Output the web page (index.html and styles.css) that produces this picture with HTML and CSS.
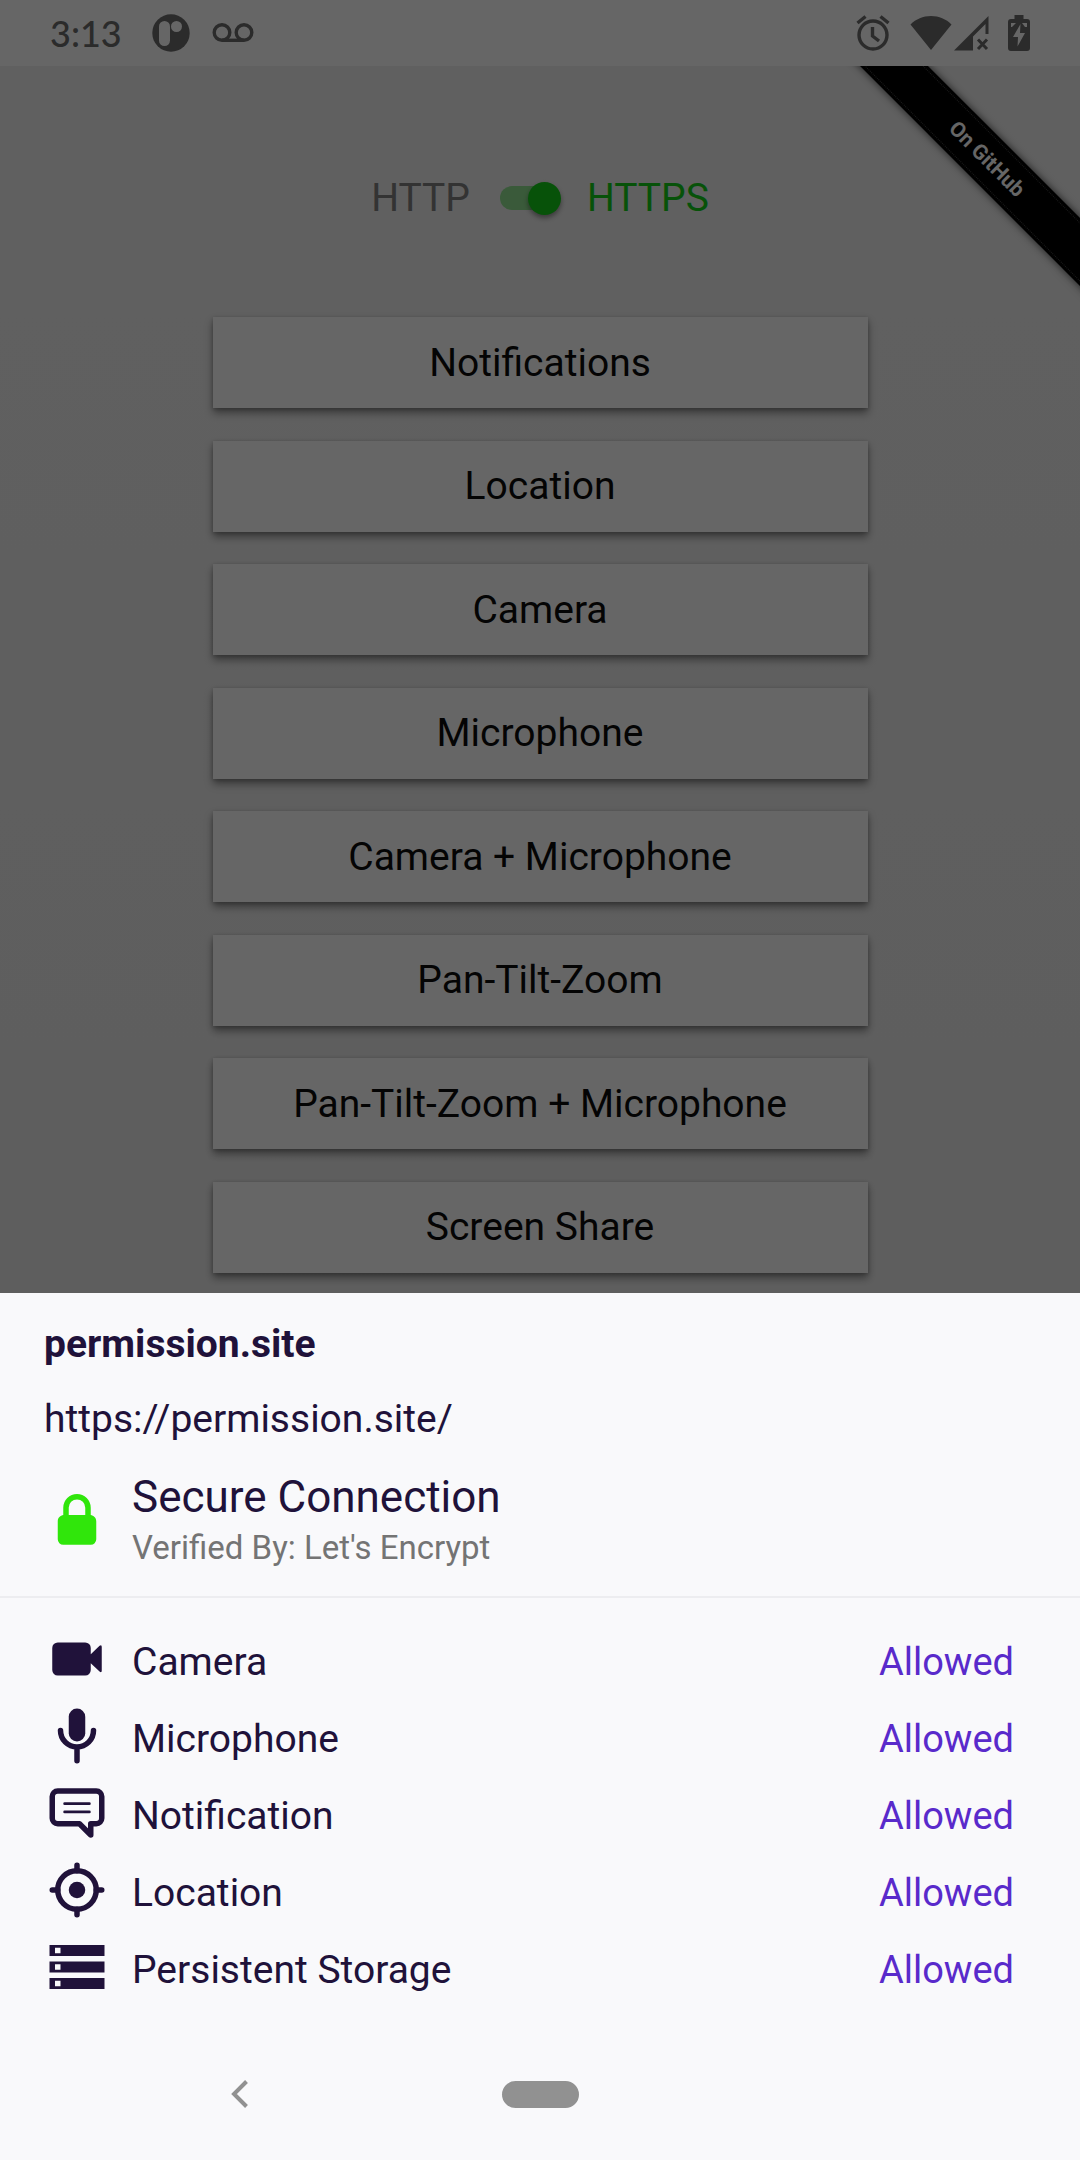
FILE: index.html
```html
<!DOCTYPE html>
<html lang="en">
<head>
<meta charset="utf-8">
<meta name="viewport" content="width=device-width, initial-scale=1">
<title>permission.site</title>
<link rel="stylesheet" href="styles.css">
</head>
<body>
<div class="backdrop">
  <header class="status">
    <div class="status-group">
      <time class="clock">3:13</time>
      <svg class="status-app" viewBox="0 0 38 38" width="38" height="38" aria-hidden="true"><circle cx="19" cy="19" r="18.700"/><rect class="cut" x="7" y="7" width="11" height="25" rx="5.500"/><circle class="cut" cx="24.500" cy="12.500" r="5.500"/></svg>
      <svg class="status-mail" viewBox="0 0 42 20" width="42" height="20" aria-hidden="true"><g fill="none" stroke="currentColor" stroke-width="3.400"><circle cx="10" cy="9.500" r="7.800"/><circle cx="32" cy="9.500" r="7.800"/><path d="M10 17.300H32"/></g></svg>
    </div>
    <div class="status-group status-right">
      <svg viewBox="0 0 34 36" width="34" height="36" aria-hidden="true"><g fill="none" stroke="currentColor" stroke-width="3.400"><circle cx="17" cy="20" r="14"/><path d="M1.500 8L9.500 1.500M24.500 1.500L32.500 8M16.500 12V21L23 26"/></g></svg>
      <svg class="wifi" viewBox="0 0 42 36" width="42" height="36" aria-hidden="true"><path d="M21 35L.5 9.500C6 4 13 1 21 1S36 4 41.500 9.500Z"/></svg>
      <svg class="signal" viewBox="0 0 36 36" width="36" height="36" aria-hidden="true"><path d="M0 35.500L34.500 1V19H31.500V9L19 21.500V35.500Z"/><path d="M24 24.500L33 34M33 24.500L24 34" fill="none" stroke="currentColor" stroke-width="3"/></svg>
      <svg viewBox="0 0 22 36" width="22" height="36" aria-hidden="true"><path d="M6.500 0H15.500V4H19Q22 4 22 7V33Q22 36 19 36H3Q0 36 0 33V7Q0 4 3 4H6.500Z"/><path class="cut" d="M3 8H8L4 12H3ZM14 8H19V12H17ZM12.500 9L5 22H10L9.500 31.500L17 18H12Z"/></svg>
    </div>
  </header>
  <main class="page">
    <div class="ribbon-clip"><a class="ribbon" href="#github">On GitHub</a></div>
    <div class="protocol">
      <label class="http" for="protocol">HTTP</label>
      <input class="switch" id="protocol" type="checkbox" role="switch" checked>
      <label class="https" for="protocol">HTTPS</label>
    </div>
    <div class="requests">
      <button type="button">Notifications</button>
      <button type="button">Location</button>
      <button type="button">Camera</button>
      <button type="button">Microphone</button>
      <button type="button">Camera + Microphone</button>
      <button type="button">Pan-Tilt-Zoom</button>
      <button type="button">Pan-Tilt-Zoom + Microphone</button>
      <button type="button">Screen Share</button>
    </div>
  </main>
</div>
<section class="sheet" aria-labelledby="site">
  <div class="site">
    <h1 id="site">permission.site</h1>
    <p class="url">https://permission.site/</p>
    <div class="secure">
      <svg class="icon lock" viewBox="0 0 24 24" aria-hidden="true"><path d="M5 12.500C5 11 6 10.500 7 10.200V7.500a5 5 0 0 1 10 0V10.200C18 10.500 19 11 19 12.500V19a2 2 0 0 1-2 2H7a2 2 0 0 1-2-2ZM9 10.200H15V7.500a3 3 0 0 0-6 0Z" fill-rule="evenodd"/></svg>
      <div>
        <h2>Secure Connection</h2>
        <p class="issuer">Verified By: Let's Encrypt</p>
      </div>
    </div>
  </div>
  <ul class="permissions">
    <li><svg class="icon" viewBox="0 0 24 24" aria-hidden="true"><path d="M5 6H15a2 2 0 0 1 2 2V10.300L20.200 7.200Q21 6.600 21 7.600V16.200Q21 17.200 20.200 16.500L17 13.500V16a2 2 0 0 1-2 2H5a2 2 0 0 1-2-2V8a2 2 0 0 1 2-2Z"/></svg><span>Camera</span><button type="button">Allowed</button></li>
    <li><svg class="icon" viewBox="0 0 24 24" aria-hidden="true"><rect x="9" y="2" width="6" height="12" rx="3"/><path d="M6 10a6 6 0 0 0 12 0M12 16.500V21" fill="none" stroke="currentColor" stroke-width="2" stroke-linecap="round"/></svg><span>Microphone</span><button type="button">Allowed</button></li>
    <li><svg class="icon" viewBox="0 0 24 24" aria-hidden="true"><path d="M5 4H19a2 2 0 0 1 2 2V13.900a2 2 0 0 1-2 2H17V20L12.900 15.900H5a2 2 0 0 1-2-2V6a2 2 0 0 1 2-2Z" fill="none" stroke="currentColor" stroke-width="2" stroke-linejoin="round"/><path d="M7.500 8.600H16.500M7.500 11.600H16.500" fill="none" stroke="currentColor" stroke-linecap="round"/></svg><span>Notification</span><button type="button">Allowed</button></li>
    <li><svg class="icon" viewBox="0 0 24 24" aria-hidden="true"><circle cx="12" cy="12" r="3"/><g fill="none" stroke="currentColor" stroke-width="2" stroke-linecap="round"><circle cx="12" cy="12" r="7"/><path d="M12 3V5M12 19V21M3 12H5M19 12H21"/></g></svg><span>Location</span><button type="button">Allowed</button></li>
    <li><svg class="icon" viewBox="0 0 24 24" aria-hidden="true"><path fill-rule="evenodd" d="M2 4H22V8H2ZM4 5V7H6V5ZM2 10H22V14H2ZM4 11V13H6V11ZM2 16H22V20H2ZM4 17V19H6V17Z"/></svg><span>Persistent Storage</span><button type="button">Allowed</button></li>
  </ul>
</section>
<nav class="navbar" aria-label="System">
  <button class="back" type="button" aria-label="Back"><svg viewBox="0 0 18 28" width="18" height="28" aria-hidden="true"><path d="M15.500 1.500L3 14L15.500 26.500" fill="none" stroke="currentColor" stroke-width="4"/></svg></button>
  <button class="home" type="button" aria-label="Home"></button>
</nav>
</body>
</html>
```
FILE: styles.css
```css
* { box-sizing: border-box; margin: 0; padding: 0; }

body {
  display: flex;
  flex-direction: column;
  min-height: 100vh;
  background: #f9f9fb;
  color: #20123a;
  font: 39px/46px Roboto, sans-serif;
}

button { border: 0; background: none; color: inherit; font: inherit; }
svg { display: block; flex: none; fill: currentColor; }

/* Web page, dimmed by the scrim */
.backdrop {
  position: relative;
  display: flex;
  flex: 1;
  flex-direction: column;
}
.backdrop::after {
  content: "";
  position: absolute;
  inset: 0;
  background: rgba(0, 0, 0, .6);
}

.status {
  display: flex;
  align-items: center;
  justify-content: space-between;
  height: 66px;
  padding: 0 50px;
  background: #fff;
  color: #6b6b6b;
}
.status-group { display: flex; align-items: center; }
.clock { font: 500 36px/46px Lato, sans-serif; }
.status-app { margin: 0 22px 0 30px; }
.wifi { margin-left: 20px; }
.signal { margin: 0 18px 0 2px; }
.cut { fill: #fff; }

.page {
  position: relative;
  display: flex;
  flex: 1;
  flex-direction: column;
  align-items: center;
  padding: 109px 32px 20px;
  background: linear-gradient(#f0f0f0, #ebebeb);
}

.ribbon-clip {
  position: absolute;
  top: 0;
  right: 0;
  width: 240px;
  height: 240px;
  overflow: hidden;
}
.ribbon {
  position: absolute;
  top: 69px;
  right: -117px;
  width: 420px;
  padding: 3px 0;
  background: #000;
  box-shadow: 0 0 8px rgba(0, 0, 0, .7);
  color: #fff;
  font-size: 21px;
  font-weight: 700;
  line-height: 42px;
  text-align: center;
  text-decoration: none;
  transform: rotate(45deg);
}
.ribbon::before {
  content: "";
  position: absolute;
  inset: 3px 0;
  border: dotted #444;
  border-width: 1px 0;
}

.protocol {
  display: flex;
  align-items: center;
  gap: 26px;
  margin-bottom: 96px;
}
.http { padding-right: 4px; color: #808080; }
.https { color: #12cd17; }
.switch {
  display: grid;
  align-items: center;
  width: 61px;
  height: 34px;
  appearance: none;
}
.switch::before, .switch::after { content: ""; grid-area: 1 / 1; }
.switch::before {
  width: 57px;
  height: 24px;
  border-radius: 12px;
  background: #91e191;
}
.switch::after {
  justify-self: end;
  width: 33px;
  height: 33px;
  border-radius: 50%;
  background: #12cd17;
  box-shadow: 0 3px 5px rgba(0, 0, 0, .4);
}

.requests {
  display: flex;
  flex: 1;
  flex-direction: column;
  justify-content: space-between;
  gap: 24px;
  width: 100%;
  max-width: 655px;
}
.requests button {
  height: 91px;
  background: #fff;
  box-shadow: 0 5px 8px rgba(0, 0, 0, .4), 0 1px 4px rgba(0, 0, 0, .2);
  color: #0c0c0c;
}

/* Site information sheet */
.site {
  display: flex;
  flex-direction: column;
  gap: 29px;
  padding: 28px 44px;
  border-bottom: 2px solid #ededf0;
}
h1 { font-size: 39px; line-height: 46px; }
h2 { font-size: 44px; font-weight: 400; line-height: 52px; }
.secure { display: flex; align-items: center; gap: 22px; }
.issuer { margin-top: 5px; color: #747474; font-size: 33px; line-height: 40px; }
.icon { width: 66px; height: 66px; }
.lock { color: #30e60b; }

.permissions { padding: 22px 66px 23px 44px; list-style: none; }
.permissions li {
  display: flex;
  align-items: center;
  gap: 22px;
  height: 77px;
}
.permissions span { flex: 1; padding-top: 6px; }
.permissions button { padding-top: 6px; color: #592acb; font-size: 38px; }

.navbar {
  display: grid;
  grid-template-columns: 1fr auto 1fr;
  align-items: center;
  height: 132px;
  color: #919191;
}
.back { justify-self: center; margin-right: 22px; }
.home {
  width: 77px;
  height: 27px;
  border-radius: 14px;
  background: #919191;
}
```
